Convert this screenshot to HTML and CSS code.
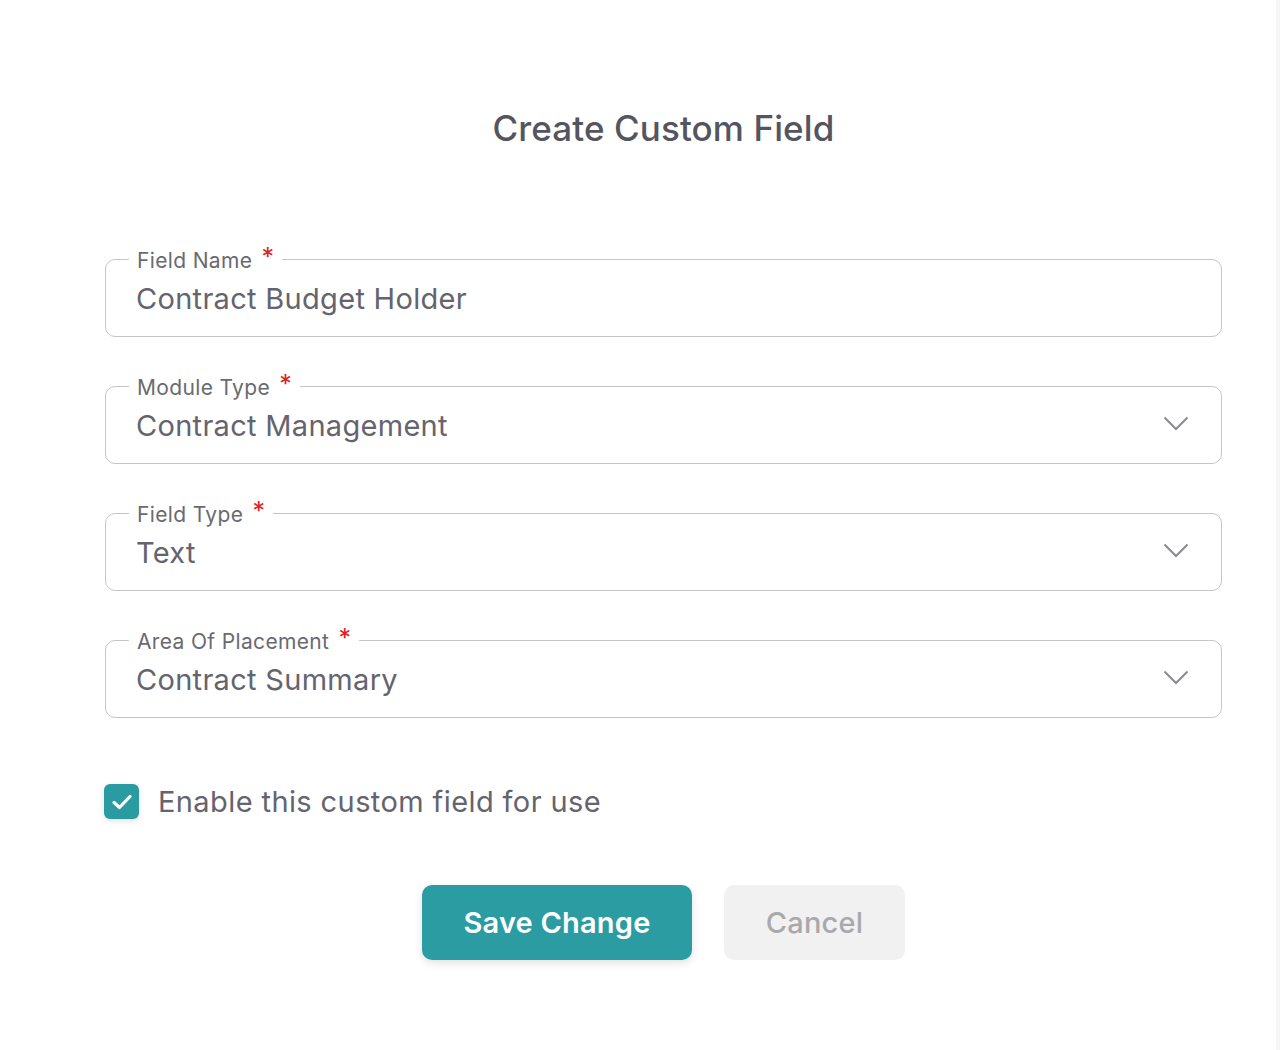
FILE: index.html
```html
<!DOCTYPE html>
<html lang="en">
<head>
<meta charset="utf-8">
<title>Create Custom Field</title>
<link rel="stylesheet" href="styles.css">
</head>
<body>
<div class="page">
  <h1 class="title">Create Custom Field</h1>
  <form class="form">
    <fieldset class="field">
      <legend class="label">Field Name <span class="req">*</span></legend>
      <div class="row"><div class="value">Contract Budget Holder</div></div>
    </fieldset>
    <fieldset class="field">
      <legend class="label">Module Type <span class="req">*</span></legend>
      <div class="row">
        <div class="value">Contract Management</div>
        <svg class="chev" width="26" height="15" viewBox="0 0 26 15"><polyline points="1.5,1.5 13,13 24.5,1.5" fill="none" stroke="#8a8a8f" stroke-width="2"/></svg>
      </div>
    </fieldset>
    <fieldset class="field">
      <legend class="label">Field Type <span class="req">*</span></legend>
      <div class="row">
        <div class="value">Text</div>
        <svg class="chev" width="26" height="15" viewBox="0 0 26 15"><polyline points="1.5,1.5 13,13 24.5,1.5" fill="none" stroke="#8a8a8f" stroke-width="2"/></svg>
      </div>
    </fieldset>
    <fieldset class="field">
      <legend class="label">Area Of Placement <span class="req">*</span></legend>
      <div class="row">
        <div class="value">Contract Summary</div>
        <svg class="chev" width="26" height="15" viewBox="0 0 26 15"><polyline points="1.5,1.5 13,13 24.5,1.5" fill="none" stroke="#8a8a8f" stroke-width="2"/></svg>
      </div>
    </fieldset>
    <label class="check-row">
      <span class="checkbox">
        <svg width="22" height="18" viewBox="0 0 22 18"><polyline points="3,9.5 8.5,14.5 19,3.5" fill="none" stroke="#fff" stroke-width="3.2" stroke-linecap="round" stroke-linejoin="round"/></svg>
      </span>
      <span class="check-text">Enable this custom field for use</span>
    </label>
    <div class="actions">
      <button type="button" class="btn btn-primary">Save Change</button>
      <button type="button" class="btn btn-secondary">Cancel</button>
    </div>
  </form>
</div>
</body>
</html>
```
FILE: styles.css
```css
* { box-sizing: border-box; }
html, body { margin: 0; padding: 0; background: #fff; }
body {
  font-family: Inter, "Noto Sans", "Liberation Sans", sans-serif;
  color: #5f5f6a;
  width: 1280px;
  height: 1050px;
  overflow: hidden;
  border-right: 4px solid #f6f6f6;
}
.page {
  padding-top: 107px;
  padding-left: 105px;
  width: 1222px;
}
.title {
  margin: 0;
  text-align: center;
  font-size: 35px;
  font-weight: 500;
  color: #55555f;
  line-height: 42px;
  letter-spacing: 0.1px;
}
.form {
  margin-top: 96px;
  display: flex;
  flex-direction: column;
}
.field {
  margin: 0 0 35px 0;
  padding: 0 23px 0 23px;
  border: 1.5px solid #c6c6ca;
  border-radius: 10px;
  height: 92px;
  min-width: 0;
}
.label {
  padding: 0 8px;
  font-size: 21px;
  line-height: 24px;
  color: #6a6a72;
  letter-spacing: 0.35px;
}
.req {
  color: #e0201e;
  font-size: 25px;
  margin-left: 3px;
  vertical-align: 2px;
}
.row {
  height: 52px;
  display: flex;
  align-items: center;
  justify-content: space-between;
}
.value {
  padding-left: 7px;
  font-size: 29px;
  line-height: 36px;
  color: #64646e;
  letter-spacing: 0.3px;
}
.chev { margin-right: 9px; margin-top: -6px; }
.check-row {
  display: flex;
  align-items: center;
  gap: 19px;
  margin-top: 31px;
  margin-left: -1px;
}
.checkbox {
  width: 35px;
  height: 35px;
  border-radius: 6px;
  background: #2a9ba1;
  display: flex;
  align-items: center;
  justify-content: center;
  box-shadow: 0 2px 6px rgba(0,0,0,0.12);
}
.check-text {
  font-size: 29px;
  color: #64646e;
  letter-spacing: 0.4px;
}
.actions {
  display: flex;
  justify-content: center;
  gap: 32px;
  margin-top: 66px;
}
.btn {
  height: 75px;
  border: none;
  border-radius: 10px;
  font-family: inherit;
  font-size: 29px;
  font-weight: 600;
  letter-spacing: 0.2px;
}
.btn-primary {
  width: 270px;
  background: #2b9ca2;
  color: #fff;
  box-shadow: 0 3px 8px rgba(0,0,0,0.12);
}
.btn-secondary {
  width: 181px;
  background: #f1f1f2;
  color: #a9a9ad;
  font-weight: 500;
}
```
